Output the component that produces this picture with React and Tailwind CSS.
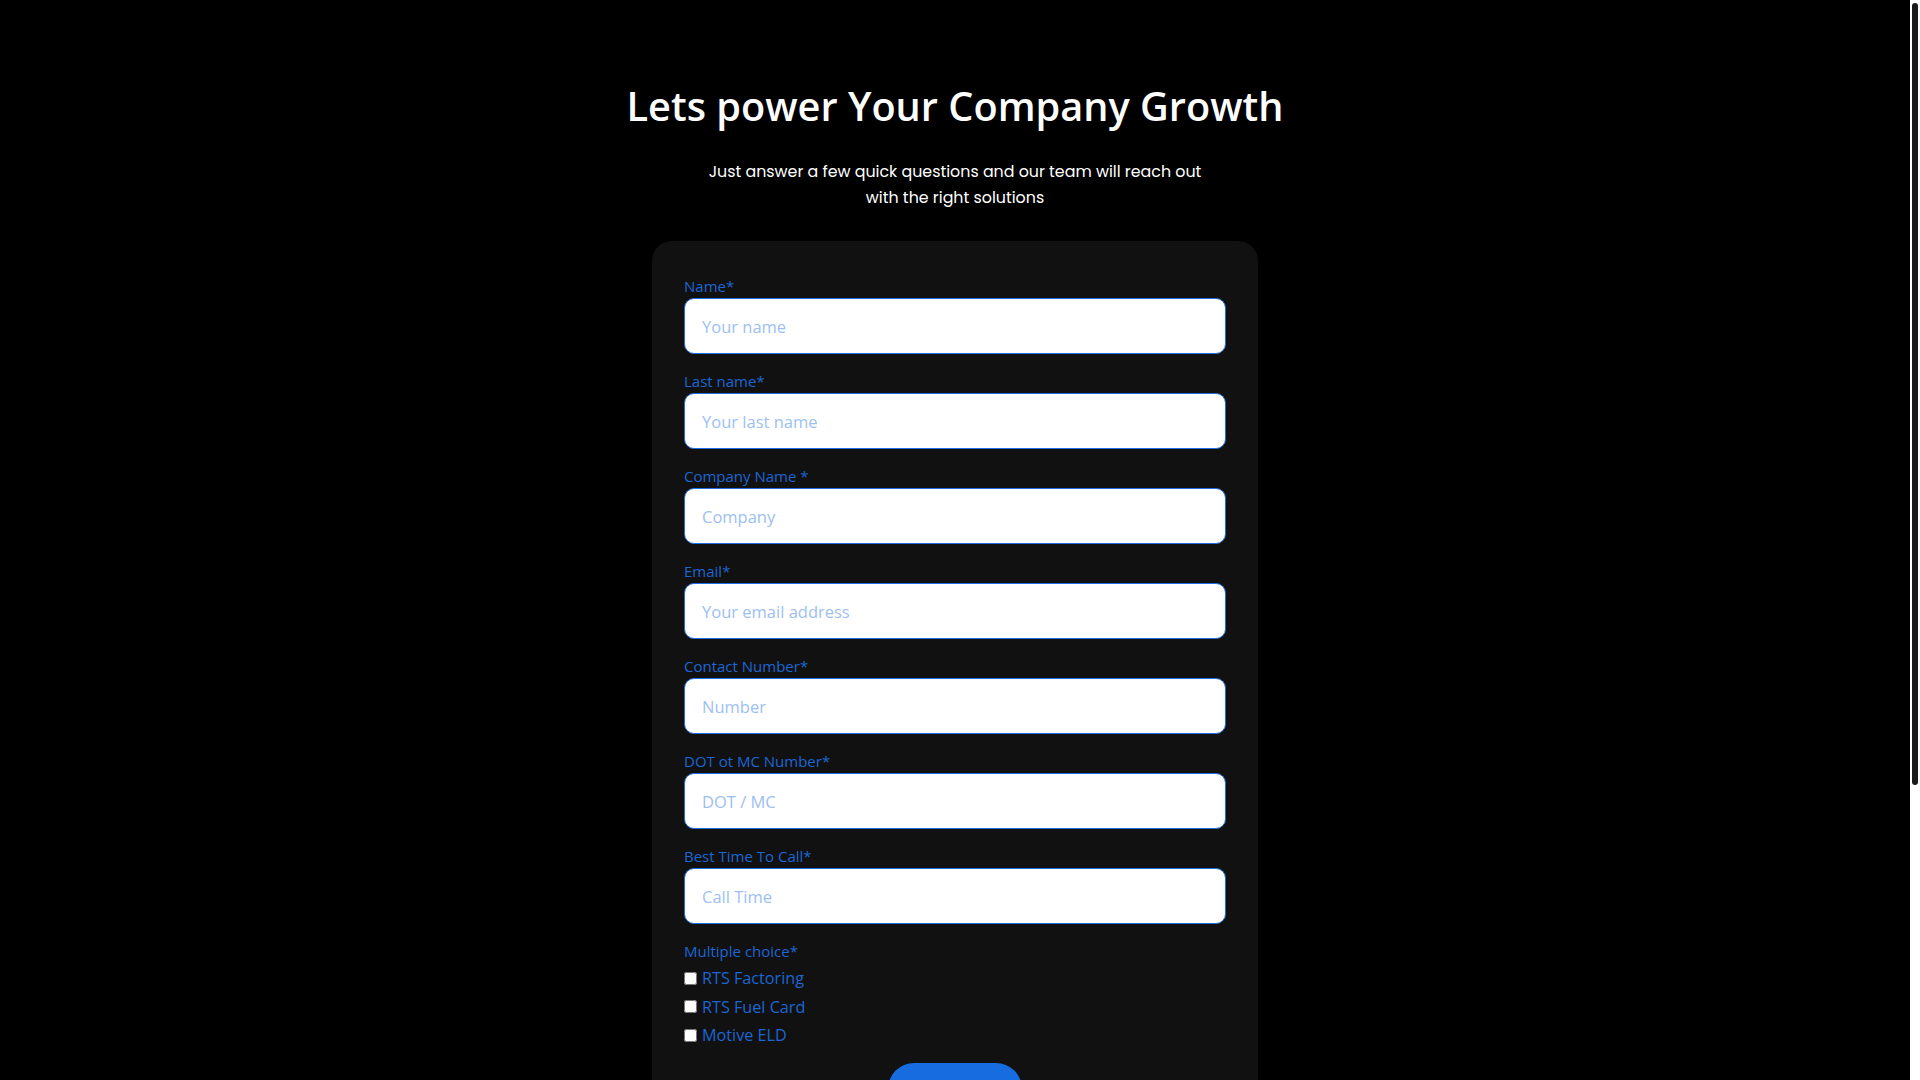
export default function App() {
  const fields = [
    { label: "Name*", ph: "Your name" },
    { label: "Last name*", ph: "Your last name" },
    { label: "Company Name *", ph: "Company" },
    { label: "Email*", ph: "Your email address" },
    { label: "Contact Number*", ph: "Number" },
    { label: "DOT ot MC Number*", ph: "DOT / MC" },
    { label: "Best Time To Call*", ph: "Call Time" },
  ];
  const choices = ["RTS Factoring", "RTS Fuel Card", "Motive ELD"];
  return (
    <div
      className="min-h-screen bg-black"
      style={{ fontFamily: '"Open Sans", "Noto Sans", sans-serif' }}
    >
      <div className="flex flex-col items-center pr-[10px] pt-[82px] pb-[340px]">
        <h1 className="text-[39.7px] leading-[48px] font-semibold text-white">
          Lets power Your Company Growth
        </h1>
        <p
          className="mt-[29px] text-center text-[15.85px] leading-[26px] text-white"
          style={{ fontFamily: 'Poppins, Inter, sans-serif' }}
        >
          Just answer a few quick questions and our team will reach out
          <br />
          with the right solutions
        </p>
        <form
          className="mt-[30px] w-[606px] rounded-[20px] bg-[#111111] px-8 pt-[35px] pb-[36px]"
          onSubmit={(e) => e.preventDefault()}
        >
          {fields.map((f) => (
            <div key={f.label} className="mb-[17px] flex flex-col">
              <label className="mb-[2px] text-[15px] leading-[20px] text-[#1c66d4]">
                {f.label}
              </label>
              <input
                type="text"
                placeholder={f.ph}
                className="h-[56px] w-full rounded-[10px] border border-[#1f6fe0] bg-white px-[17px] text-[16.5px] text-[#1c66d4] outline-none placeholder:text-[#9dc0f2]"
              />
            </div>
          ))}
          <div className="flex flex-col">
            <span className="text-[15px] leading-[20px] text-[#1c66d4]">
              Multiple choice*
            </span>
            <div className="mt-[3px] flex flex-col">
              {choices.map((c) => (
                <label
                  key={c}
                  className="flex h-[28.5px] items-center gap-[5px] text-[16.2px] text-[#1c66d4]"
                >
                  <input type="checkbox" className="m-0 h-[13px] w-[13px]" />
                  <span>{c}</span>
                </label>
              ))}
            </div>
          </div>
          <div className="mt-[13px] flex justify-center">
            <button
              type="submit"
              className="h-[52px] w-[134px] rounded-[26px] bg-[#176ce0] text-[16px] font-semibold text-white"
            >
              Submit
            </button>
          </div>
        </form>
      </div>
      <div className="fixed right-0 top-0 h-screen w-[10px] bg-white">
        <div className="ml-[2px] mt-[3px] h-[782px] w-[6px] rounded-full bg-[#1a1a1a]" />
      </div>
    </div>
  );
}
